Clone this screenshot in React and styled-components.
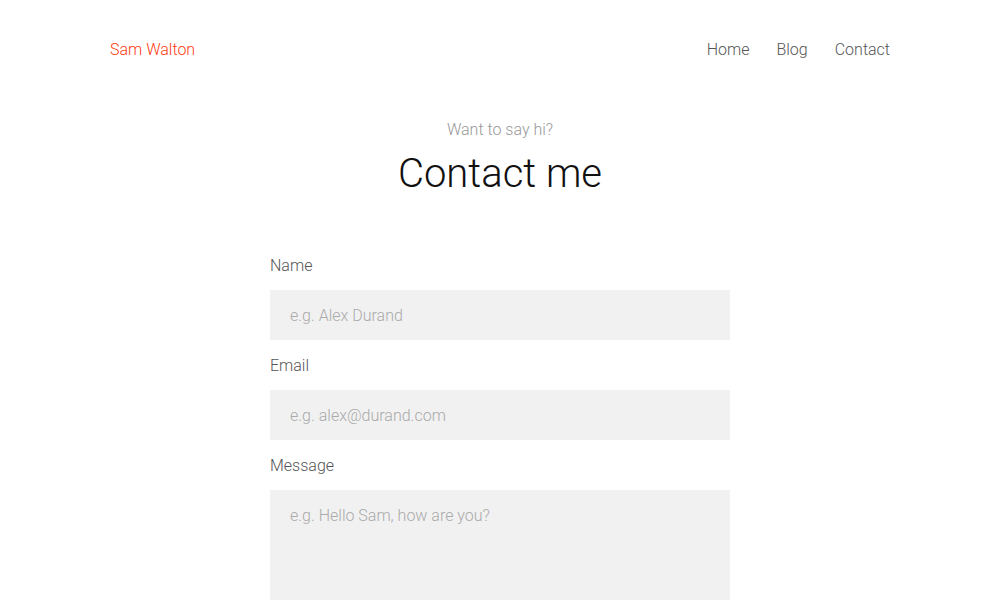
import React from "react";
import styled, { createGlobalStyle } from "styled-components";

const GlobalStyle = createGlobalStyle`
  body {
    margin: 0;
    background: #fff;
    font-family: "Roboto", "Liberation Sans", sans-serif;
    font-weight: 300;
  }
`;

const Page = styled.div`
  width: 780px;
  margin: 0 auto;
`;

const Header = styled.header`
  display: flex;
  justify-content: space-between;
  align-items: center;
  padding-top: 30px;
  height: 38px;
`;

const Brand = styled.a`
  color: #ff3b12;
  font-size: 16px;
  text-decoration: none;
`;

const Nav = styled.nav`
  display: flex;
  gap: 27px;
  a {
    color: #555;
    font-size: 16px;
    text-decoration: none;
  }
`;

const Intro = styled.div`
  text-align: center;
  margin-top: 52px;
  p {
    margin: 0;
    font-size: 16px;
    line-height: 20px;
    color: #999;
  }
  h1 {
    margin: 10px 0 0;
    font-size: 40px;
    line-height: 48px;
    font-weight: 300;
    color: #111;
  }
`;

const Form = styled.form`
  width: 460px;
  margin: 57px auto 0;
  display: flex;
  flex-direction: column;
`;

const Label = styled.label`
  font-size: 16px;
  line-height: 21px;
  color: #555;
  margin-bottom: 14px;
`;

const Field = styled.input`
  box-sizing: border-box;
  height: ${(p) => (p.as === "textarea" ? "130px" : "50px")};
  border: none;
  background: #f1f1f1;
  padding: ${(p) => (p.as === "textarea" ? "16px 20px" : "0 20px")};
  font-family: inherit;
  font-weight: 300;
  font-size: 16px;
  line-height: 20px;
  color: #333;
  margin-bottom: 15px;
  resize: none;
  outline: none;
  &::placeholder {
    color: #aaa;
  }
`;

export default function App() {
  return (
    <Page>
      <GlobalStyle />
      <Header>
        <Brand href="#">Sam Walton</Brand>
        <Nav>
          <a href="#">Home</a>
          <a href="#">Blog</a>
          <a href="#">Contact</a>
        </Nav>
      </Header>
      <Intro>
        <p>Want to say hi?</p>
        <h1>Contact me</h1>
      </Intro>
      <Form>
        <Label>Name</Label>
        <Field placeholder="e.g. Alex Durand" />
        <Label>Email</Label>
        <Field placeholder="e.g. alex@durand.com" />
        <Label>Message</Label>
        <Field as="textarea" placeholder="e.g. Hello Sam, how are you?" />
      </Form>
    </Page>
  );
}
